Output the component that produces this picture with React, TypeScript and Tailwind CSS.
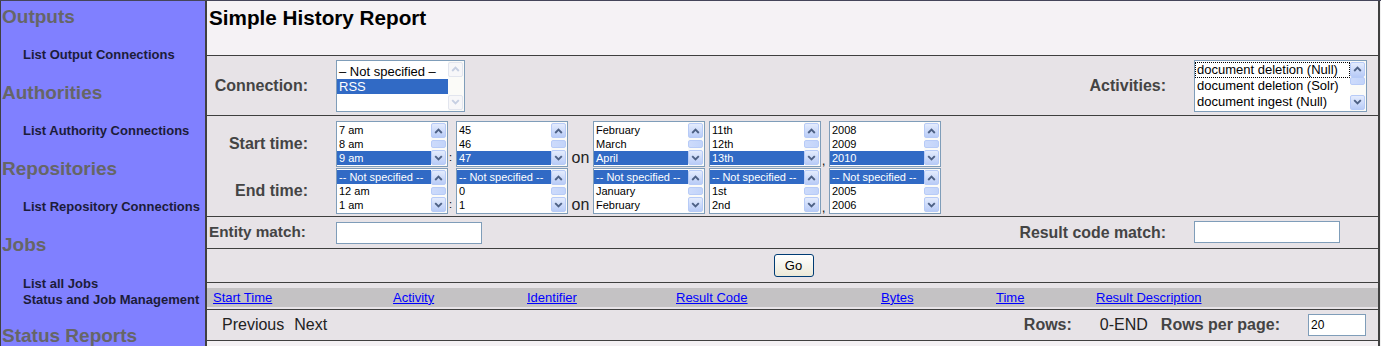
import React from "react";

const ChevUp = ({ c }: { c: string }) => (
  <svg width="9" height="6" viewBox="0 0 9 6">
    <path d="M1.2 5 L4.5 1.7 L7.8 5" fill="none" stroke={c} strokeWidth="1.9" />
  </svg>
);
const ChevDown = ({ c }: { c: string }) => (
  <svg width="9" height="6" viewBox="0 0 9 6">
    <path d="M1.2 1.2 L4.5 4.5 L7.8 1.2" fill="none" stroke={c} strokeWidth="1.9" />
  </svg>
);

function ScrollBar({ disabled, thumb }: { disabled?: boolean; thumb?: "top" | "mid" }) {
  const btn = disabled
    ? "border-[#e2e5ee] bg-[#f7f7f9]"
    : "border-[#b7cbf7] bg-linear-to-b from-[#e4ecfd] to-[#b9ccf7]";
  const c = disabled ? "#c6cfe2" : "#4d6185";
  return (
    <div className="w-[16px] h-full flex flex-col bg-[#fbfbf8] py-[1px] pr-[1px]">
      <div className={`h-[15px] w-[15px] shrink-0 rounded-[2px] border flex items-center justify-center ${btn}`}>
        <ChevUp c={c} />
      </div>
      <div className={`flex-1 flex flex-col ${thumb === "top" ? "justify-start" : "justify-center"}`}>
        {thumb && (
          <div className="h-[8px] w-[15px] rounded-[2px] border border-[#b7cbf7] bg-linear-to-r from-[#cddbfb] to-[#c2d4fa]" />
        )}
      </div>
      <div className={`h-[15px] w-[15px] shrink-0 rounded-[2px] border flex items-center justify-center ${btn}`}>
        <ChevDown c={c} />
      </div>
    </div>
  );
}

function ListBox({
  cls,
  items,
  sel,
  row,
  listCls,
  disabled,
  thumb,
  focus,
}: {
  cls: string;
  items: string[];
  sel: number;
  row: string;
  listCls: string;
  disabled?: boolean;
  thumb?: "top" | "mid";
  focus?: number;
}) {
  return (
    <div className={`flex border border-[#7f9db9] bg-white shrink-0 ${cls}`}>
      <div className={`flex-1 overflow-hidden ${listCls}`}>
        {items.map((t, i) => (
          <div
            key={i}
            className={`${row} pl-[2px] whitespace-nowrap ${
              i === sel ? "bg-[#316ac5] text-white" : "text-black"
            } ${i === focus ? "outline-1 outline-dotted outline-black -outline-offset-1" : ""}`}
          >
            {t}
          </div>
        ))}
      </div>
      <ScrollBar disabled={disabled} thumb={thumb} />
    </div>
  );
}

const TROW = "h-[14px] leading-[14px] text-[11px]";

function TimeBox({ items, sel }: { items: string[]; sel: number }) {
  return (
    <ListBox
      cls="w-[112px] h-[46px]"
      items={items}
      sel={sel}
      row={TROW}
      listCls="pt-[1px]"
      thumb="mid"
    />
  );
}

export default function App() {
  const label = "font-bold text-[16px] text-[#444444] whitespace-nowrap";
  return (
    <div className="w-[1381px] h-[346px] overflow-hidden flex border-t border-[#45455a] bg-[#f0edf0] font-['Liberation_Sans',Arial,Helvetica,sans-serif]">
      {/* Sidebar */}
      <aside className="w-[207px] shrink-0 h-full bg-[#8080ff] border-l border-l-[#404040] border-r-2 border-r-[#404040] pl-[1px]">
        <div className="h-[32px] flex items-center text-[19px] font-bold text-[#666666]">Outputs</div>
        <div className="py-[14px] pl-[21px] text-[13px] leading-[16px] font-bold text-[#1c1c3a] whitespace-nowrap">
          List Output Connections
        </div>
        <div className="h-[32px] flex items-center text-[19px] font-bold text-[#666666]">Authorities</div>
        <div className="py-[14px] pl-[21px] text-[13px] leading-[16px] font-bold text-[#1c1c3a] whitespace-nowrap">
          List Authority Connections
        </div>
        <div className="h-[32px] flex items-center text-[19px] font-bold text-[#666666]">Repositories</div>
        <div className="py-[14px] pl-[21px] text-[13px] leading-[16px] font-bold text-[#1c1c3a] whitespace-nowrap">
          List Repository Connections
        </div>
        <div className="h-[32px] flex items-center text-[19px] font-bold text-[#666666]">Jobs</div>
        <div className="pt-[15px] pb-[11px] pl-[21px] text-[13px] leading-[16px] font-bold text-[#1c1c3a] whitespace-nowrap">
          <div>List all Jobs</div>
          <div>Status and Job Management</div>
        </div>
        <div className="h-[34px] flex items-center text-[19px] font-bold text-[#666666] whitespace-nowrap">
          Status Reports
        </div>
      </aside>

      {/* Main */}
      <main className="w-[1171px] shrink-0 h-full flex flex-col">
        {/* Title */}
        <div className="h-[55px] shrink-0 bg-[#f5f2f5] border-b border-[#3f3f3f] pl-[2px] pt-[5px]">
          <div className="text-[20.7px] leading-[24px] font-bold text-black">Simple History Report</div>
        </div>

        {/* Connection / Activities */}
        <div className="h-[60px] shrink-0 bg-[#e7e3e7] border-b border-[#3f3f3f] flex items-center justify-between pr-[11px]">
          <div className="flex items-center">
            <div className={`w-[101px] text-right ${label}`}>Connection:</div>
            <div className="w-[28px]" />
            <ListBox
              cls="w-[129px] h-[52px]"
              items={["\u2013 Not specified \u2013", "RSS"]}
              sel={1}
              row="h-[15px] leading-[15px] text-[13px]"
              listCls="pt-[3px]"
              disabled
            />
          </div>
          <div className="flex items-center">
            <div className={`text-right ${label}`}>Activities:</div>
            <div className="w-[28px]" />
            <ListBox
              cls="w-[173px] h-[52px]"
              items={["document deletion (Null)", "document deletion (Solr)", "document ingest (Null)"]}
              sel={-1}
              focus={0}
              row="h-[16px] leading-[16px] text-[13px]"
              listCls="pt-[1px]"
              thumb="top"
            />
          </div>
        </div>

        {/* Times */}
        <div className="h-[101px] shrink-0 bg-[#e7e3e7] border-b border-[#3f3f3f] pt-[5px] flex flex-col gap-[1px]">
          <div className="flex items-end">
            <div className={`w-[101px] self-center text-right ${label}`}>Start time:</div>
            <div className="w-[28px]" />
            <TimeBox items={["7 am", "8 am", "9 am"]} sel={2} />
            <div className="w-[8px] text-[11px] leading-[14px] text-black pl-[1px] pb-[3px]">:</div>
            <TimeBox items={["45", "46", "47"]} sel={2} />
            <div className="w-[25px] text-center text-[16px] leading-[18px] text-[#222222]">on</div>
            <TimeBox items={["February", "March", "April"]} sel={2} />
            <div className="w-[4px]" />
            <TimeBox items={["11th", "12th", "13th"]} sel={2} />
            <div className="w-[8px] text-[12px] leading-[12px] text-black pl-[1px]">,</div>
            <TimeBox items={["2008", "2009", "2010"]} sel={2} />
          </div>
          <div className="flex items-end">
            <div className={`w-[101px] self-center text-right ${label}`}>End time:</div>
            <div className="w-[28px]" />
            <TimeBox items={["-- Not specified --", "12 am", "1 am"]} sel={0} />
            <div className="w-[8px] text-[11px] leading-[14px] text-black pl-[1px] pb-[3px]">:</div>
            <TimeBox items={["-- Not specified --", "0", "1"]} sel={0} />
            <div className="w-[25px] text-center text-[16px] leading-[18px] text-[#222222]">on</div>
            <TimeBox items={["-- Not specified --", "January", "February"]} sel={0} />
            <div className="w-[4px]" />
            <TimeBox items={["-- Not specified --", "1st", "2nd"]} sel={0} />
            <div className="w-[8px] text-[12px] leading-[12px] text-black pl-[1px]">,</div>
            <TimeBox items={["-- Not specified --", "2005", "2006"]} sel={0} />
          </div>
        </div>

        {/* Entity / Result code match */}
        <div className="h-[32px] shrink-0 bg-[#e7e3e7] border-b border-[#3f3f3f] flex items-center justify-between pr-[38px]">
          <div className="flex items-center">
            <div className="w-[129px] pl-[2px] font-bold text-[15.3px] text-[#444444] whitespace-nowrap">Entity match:</div>
            <div className="w-[146px] h-[22px] border border-[#7f9db9] bg-white" />
          </div>
          <div className="flex items-center">
            <div className="font-bold text-[15.9px] text-[#444444] whitespace-nowrap">Result code match:</div>
            <div className="w-[28px]" />
            <div className="w-[146px] h-[22px] border border-[#7f9db9] bg-white" />
          </div>
        </div>

        {/* Go */}
        <div className="h-[34px] shrink-0 bg-[#e7e3e7] border-b border-[#3f3f3f] flex items-center justify-center pl-[2px]">
          <button className="w-[40px] h-[23px] rounded-[3px] border border-[#003c74] bg-linear-to-b from-white to-[#ece9d8] text-[13px] text-black leading-none">
            Go
          </button>
        </div>

        {/* Header */}
        <div className="h-[27px] shrink-0 bg-[#e7e3e7] border-b border-[#3f3f3f] pt-[5px]">
          <div className="h-[19px] bg-[#c4c2c4] flex items-center pl-[6px] text-[13px] text-[#0000ff] whitespace-nowrap">
            <span className="w-[180px]"><span className="underline">Start Time</span></span>
            <span className="w-[134px]"><span className="underline">Activity</span></span>
            <span className="w-[149px]"><span className="underline">Identifier</span></span>
            <span className="w-[205px]"><span className="underline">Result Code</span></span>
            <span className="w-[115px]"><span className="underline">Bytes</span></span>
            <span className="w-[100px]"><span className="underline">Time</span></span>
            <span><span className="underline">Result Description</span></span>
          </div>
        </div>

        {/* Footer */}
        <div className="h-[31px] shrink-0 bg-[#e7e3e7] border-b border-[#3f3f3f] flex items-center justify-between pl-[15px] pr-[12px]">
          <div className="flex items-center gap-[10px] text-[16px] text-[#222222]">
            <span>Previous</span>
            <span>Next</span>
          </div>
          <div className="flex items-center">
            <span className={label}>Rows:</span>
            <span className="w-[28px]" />
            <span className="text-[16px] text-[#222222]">0-END</span>
            <span className="w-[13px]" />
            <span className={label}>Rows per page:</span>
            <span className="w-[28px]" />
            <div className="w-[58px] h-[22px] border border-[#7f9db9] bg-white text-[12px] leading-[20px] pl-[2px] text-black">
              20
            </div>
          </div>
        </div>
        <div className="flex-1 bg-[#f3f0f3]" />
      </main>

      <div className="w-[2px] shrink-0 h-full bg-[#404040]" />
      <div className="w-[1px] shrink-0 h-full bg-[#f0f0f0]" />
    </div>
  );
}
